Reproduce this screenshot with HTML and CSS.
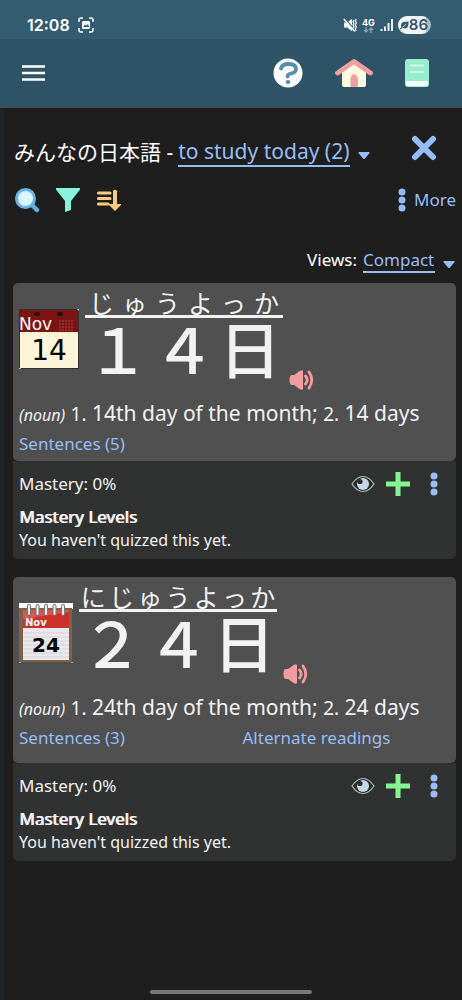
FILE: index.html
```html
<!DOCTYPE html>
<html lang="en">
<head>
<meta charset="utf-8">
<meta name="viewport" content="width=device-width, initial-scale=1">
<title>みんなの日本語</title>
<link rel="stylesheet" href="styles.css">
</head>
<body>
<svg class="defs" aria-hidden="true">
  <symbol id="caret" viewBox="0 0 12 8"><path d="M1 0h10q1 0 .6 1L7 6.500q-1 1-2 0L.4 1Q0 0 1 0z" fill="#98bdf5"/></symbol>
  <symbol id="dots" viewBox="0 0 8 24"><g fill="#98bdf5"><circle cx="4" cy="4" r="3.500"/><circle cx="4" cy="12" r="3.500"/><circle cx="4" cy="20" r="3.500"/></g></symbol>
  <symbol id="speaker" viewBox="0 0 24 20"><path d="M2 5h2.500l6-4.200Q13-.3 13.500 1v18q-.5 1.300-3 .2L4.500 15H2q-2-.5-2-5t2-5z" fill="#f19ca0"/><path d="M16 6q3.500 4 0 8M19.500 2q5.500 8 0 16" fill="none" stroke="#f19ca0" stroke-width="2.800" stroke-linecap="round"/></symbol>
  <symbol id="eye" viewBox="0 0 24 18"><path d="M1 9Q6 1.500 12 1.500T23 9q-5 7.500-11 7.500T1 9z" fill="#272c2d" stroke="#b4bfc4" stroke-width="1.200"/><circle cx="12" cy="9" r="6" fill="#c5d9e4"/><circle cx="9" cy="6.500" r="2.600" fill="#272c2d"/></symbol>
  <symbol id="plus" viewBox="0 0 24 24"><path d="M9.500 0h5v9.500H24v5h-9.500V24h-5v-9.500H0v-5h9.500z" fill="#80f794"/></symbol>
</svg>

<div class="statusbar">
  <span class="clock">12:08</span>
  <svg width="16" height="16" viewBox="0 0 16 16"><path d="M1 5V3q0-2 2-2h2M11 1h2q2 0 2 2v2M15 11v2q0 2-2 2h-2M5 15H3q-2 0-2-2v-2" fill="none" stroke="#fff" stroke-width="1.500"/><rect x="4" y="4" width="8" height="8" rx="1.500" fill="#fff"/><path d="M5 10l2-2.500 1.500 1L10 7l1.200 3z" fill="#335c70"/></svg>
  <div class="signals">
    <svg width="14" height="14" viewBox="0 0 14 14"><path d="M1 4.500h3L9 1v12L4 9.500H1z" fill="#fff"/><path d="M1.500 0l11 13" stroke="#335c70" stroke-width="1.500"/><path d="M.8 1l11 12.500" stroke="#fff" stroke-width="1.400"/><path d="M11 2l-1 1.700 1 1.700-1 1.700 1 1.700-1 1.700M13.300 1l-1 2 1 2-1 2 1 2-1 2 1 2" fill="none" stroke="#fff" stroke-width="1.200"/></svg>
    <span class="network"><span>4G</span>
      <svg width="11" height="6" viewBox="0 0 11 6"><path d="M3 0v5M1 3l2 2 2-2" fill="none" stroke="#92a9b4" stroke-width="1.200"/><path d="M8 6V1M6 3l2-2 2 2" fill="none" stroke="#92a9b4" stroke-width="1.200"/></svg></span>
    <svg width="13" height="14" viewBox="0 0 13 14"><path d="M1.500 11v2M5 8.500V13M8.500 5v8M12 1v12" fill="none" stroke="#fff" stroke-width="1.800"/></svg>
    <span class="battery"><svg width="9" height="10" viewBox="0 0 10 10"><path d="M1.500 8Q0 2.500 4.500 1.800L9.500 1Q10 8 6 8.500 3.500 9 2.500 7.800z" fill="#2f5568"/><path d="M0 9.500l2-1.500" stroke="#2f5568" stroke-width="1.300"/><path d="M3 7.500L7 4" stroke="#e8eff4"/></svg><span>86</span></span>
  </div>
</div>

<header class="appbar">
  <button class="icon" aria-label="Menu"><svg width="23" height="16" viewBox="0 0 23 16"><path d="M0 1.500h23M0 8h23M0 14.500h23" stroke="#fff" stroke-width="2.400"/></svg></button>
  <nav class="shortcuts">
    <button class="icon" aria-label="Help"><svg width="30" height="30" viewBox="0 0 30 30"><circle cx="15" cy="15" r="14.500" fill="#fff"/><path d="M8 10.500q1-4.500 7.500-4.500 7.500 0 7.500 5 0 3.500-5 4.500-3.500.7-3.500 3" fill="none" stroke="#558eac" stroke-width="3.800" stroke-linecap="round"/><ellipse cx="15" cy="24" rx="2.500" ry="2" fill="#558eac"/></svg></button>
    <button class="icon" aria-label="Home"><svg width="38" height="30" viewBox="0 0 38 30"><path d="M7 13L19 5l12 8v14q0 2-2 2H9q-2 0-2-2z" fill="#fdfbe0"/><path d="M2.500 15L19 3.500 35.500 15" fill="none" stroke="#f19e9f" stroke-width="4.800" stroke-linecap="round" stroke-linejoin="round"/><path d="M15.500 29v-8q.5-4 3.500-5 3 1 4 5v8z" fill="#f19e9f"/></svg></button>
    <button class="icon" aria-label="Dictionary"><svg width="24" height="30" viewBox="0 0 24 30"><rect x="0" y="1" width="24" height="28" rx="3" fill="#98edcf"/><path d="M5 7.500h14M5 14h14" stroke="#d9fff2" stroke-width="1.300"/><path d="M1 23h22v3q0 2-3 2H3q-2 0-2-2z" fill="#fff"/></svg></button>
  </nav>
</header>

<main class="page">
  <div class="titlerow">
    <h1 class="title"><span lang="ja">みんなの日本語</span> -</h1>
    <select class="picker" aria-label="Study list"><option>to study today (2)</option></select>
    <svg class="caret" width="12" height="8"><use href="#caret"/></svg>
    <button class="icon close" aria-label="Close"><svg width="26" height="26" viewBox="0 0 26 26"><path d="M4 4l18 18M22 4L4 22" stroke="#98bdf5" stroke-width="6" stroke-linecap="round"/></svg></button>
  </div>

  <div class="toolrow">
    <button class="icon" aria-label="Search"><svg width="26" height="26" viewBox="0 0 26 26"><path d="M18 18l5 5" stroke="#63afe0" stroke-width="4.500" stroke-linecap="round"/><circle cx="11.500" cy="11.500" r="10.500" fill="#63b5ea"/><circle cx="11.500" cy="11.500" r="7.500" fill="#dcf7ff"/></svg></button>
    <button class="icon" aria-label="Filter"><svg width="26" height="26" viewBox="0 0 26 26"><path d="M1 1h24v1.500L16 14v9l-6 2V14L1 2.500z" fill="#87f5dc"/></svg></button>
    <button class="icon" aria-label="Sort"><svg width="26" height="26" viewBox="0 0 26 26"><path d="M2.500 6H14M2.500 11.500H14M2.500 17H12" stroke="#f8cd78" stroke-width="3.200" stroke-linecap="round"/><path d="M17 4q2-2.500 4 0v13h4q.5 1-1 2l-5 5-5-5q-1.500-1-1-2h4z" fill="#f8cd78"/></svg></button>
    <button class="more"><svg width="8" height="24"><use href="#dots"/></svg>More</button>
  </div>

  <div class="viewrow">
    <label for="view">Views:</label>
    <select id="view" class="picker small"><option>Compact</option></select>
    <svg class="caret" width="12" height="8"><use href="#caret"/></svg>
  </div>

  <article class="entry">
    <section class="word">
      <div class="headline">
        <svg class="calendar" width="60" height="60" viewBox="0 0 60 60"><rect x=".5" y=".5" width="59" height="59" fill="#fcf5d8" stroke="#353030"/><path d="M0 59v1h2M58 0h2v2" stroke="#fff" fill="none"/><path d="M1 1h58v22H1z" fill="#7c1414"/><ellipse cx="18" cy="5" rx="3" ry="2" fill="#201010"/><ellipse cx="41" cy="5" rx="3" ry="2" fill="#201010"/><path d="M40 12h15M40 15h15M40 18h15M40 21h15" stroke="#9e4b4b" stroke-dasharray="2 1"/><text x="0" y="21" class="cal-month">Nov</text><text x="30" y="51" class="cal-day" text-anchor="middle">14</text></svg>
        <div class="reading" lang="ja">
          <div class="kana"><span>じ</span><span>ゅ</span><span>う</span><span>よ</span><span>っ</span><span>か</span></div>
          <div class="kanji"><span>１</span><span>４</span><span>日</span></div>
        </div>
        <button class="icon listen" aria-label="Listen"><svg width="25" height="20"><use href="#speaker"/></svg></button>
      </div>
      <p class="meaning"><i>(noun)</i> <span class="num">1.</span> 14th day of the month; <span class="num">2.</span> 14 days</p>
      <div class="links"><a href="#">Sentences (5)</a></div>
    </section>
    <section class="mastery">
      <div class="masteryrow">
        <span>Mastery: 0%</span>
        <div class="actions">
          <button class="icon" aria-label="Known"><svg width="24" height="18"><use href="#eye"/></svg></button>
          <button class="icon" aria-label="Add"><svg width="24" height="24"><use href="#plus"/></svg></button>
          <button class="icon" aria-label="Options"><svg width="8" height="24"><use href="#dots"/></svg></button>
        </div>
      </div>
      <h2 class="levels">Mastery Levels</h2>
      <p class="note">You haven't quizzed this yet.</p>
    </section>
  </article>

  <article class="entry">
    <section class="word roomy">
      <div class="headline">
        <svg class="calendar" width="54" height="60" viewBox="0 0 54 60"><path d="M0 0h54v6H0z" fill="#fff"/><path d="M0 5h53v54H0z" fill="#7d6247"/><path d="M4 7h46v50H4z" fill="#e9e9ed"/><path d="M4 30h46M4 34h46M4 38h46M4 42h46M4 46h46M4 50h46M4 54h46" stroke="#d3d3d9"/><path d="M4 7h46v18H4z" fill="#cd302b"/><path d="M4 7h46v2L4 16z" fill="#dc544d"/><g stroke="#777" stroke-width="4" stroke-linecap="round"><path d="M10 3v8M18.500 3v8M27 3v8M35.500 3v8M44 3v8"/></g><g stroke="#eee" stroke-width="2" stroke-linecap="round"><path d="M10 3v8M18.500 3v8M27 3v8M35.500 3v8M44 3v8"/></g><path d="M0 60h2M52 60h2" stroke="#fff"/><text x="6" y="23" class="pad-month">Nov</text><text x="27" y="49" class="pad-day" text-anchor="middle">24</text></svg>
        <div class="reading" lang="ja">
          <div class="kana"><span>に</span><span>じ</span><span>ゅ</span><span>う</span><span>よ</span><span>っ</span><span>か</span></div>
          <div class="kanji"><span>２</span><span>４</span><span>日</span></div>
        </div>
        <button class="icon listen" aria-label="Listen"><svg width="25" height="20"><use href="#speaker"/></svg></button>
      </div>
      <p class="meaning"><i>(noun)</i> <span class="num">1.</span> 24th day of the month; <span class="num">2.</span> 24 days</p>
      <div class="links"><a href="#">Sentences (3)</a><a href="#">Alternate readings</a></div>
    </section>
    <section class="mastery">
      <div class="masteryrow">
        <span>Mastery: 0%</span>
        <div class="actions">
          <button class="icon" aria-label="Known"><svg width="24" height="18"><use href="#eye"/></svg></button>
          <button class="icon" aria-label="Add"><svg width="24" height="24"><use href="#plus"/></svg></button>
          <button class="icon" aria-label="Options"><svg width="8" height="24"><use href="#dots"/></svg></button>
        </div>
      </div>
      <h2 class="levels">Mastery Levels</h2>
      <p class="note">You haven't quizzed this yet.</p>
    </section>
  </article>

  <div class="homebar"></div>
</main>
</body>
</html>
```
FILE: styles.css
```css
* { box-sizing: border-box; }
body {
  margin: 0;
  min-height: 100vh;
  display: flex;
  flex-direction: column;
  background: #1e1e1e;
  color: #f2f2f2;
  font: 17px/24px "Noto Sans", "Noto Sans CJK JP", sans-serif;
}
h1, h2, p { margin: 0; font-weight: 400; }
svg { display: block; flex: none; }
.defs { position: absolute; width: 0; height: 0; }
button, select {
  appearance: none;
  border: 0;
  border-radius: 0;
  padding: 0;
  background: none;
  color: #98bdf5;
  font: inherit;
}
.icon { display: block; flex: none; }

.statusbar {
  display: flex;
  align-items: center;
  gap: 8px;
  height: 39px;
  padding: 11px 31px 0 27px;
  background: #335c70;
  color: #fff;
}
.clock { font: 600 16px/20px Inter, sans-serif; }
.signals { display: flex; align-items: center; gap: 5px; margin-left: auto; }
.network { display: flex; flex-direction: column; align-items: center; font: 700 9px/9px Inter, sans-serif; }
.battery {
  display: flex;
  align-items: center;
  height: 18px;
  padding: 0 3px 0 2px;
  border-radius: 9px;
  background: linear-gradient(90deg, #f0f5f8 86%, #a7bac4 86%);
  color: #2f5568;
  font: 600 15px/18px Inter, sans-serif;
}

.appbar {
  display: flex;
  align-items: center;
  justify-content: space-between;
  height: 69px;
  padding: 0 33px 0 22px;
  border-bottom: 1px solid #444c50;
  background: #2f5366;
}
.shortcuts { display: flex; gap: 32px; }

.page {
  flex: 1;
  display: flex;
  flex-direction: column;
  padding: 26px 6px 6px 9px;
  border-left: 4px solid #1d2527;
}
.titlerow { display: flex; align-items: center; height: 36px; padding-left: 1px; }
.title { margin-right: 5px; font-size: 21px; line-height: 28px; color: #fff; }
.picker { border-bottom: 2px solid #98bdf5; font-size: 21px; line-height: 26px; height: 30px; }
.picker.small { font-size: 17px; line-height: 22px; height: 24px; }
.caret { margin-left: 8px; margin-top: 8px; }
.close { margin: 0 19px 8px auto; }

.toolrow { display: flex; align-items: center; gap: 15px; height: 26px; margin-top: 17px; padding-left: 1px; }
.more { display: flex; align-items: center; gap: 8px; margin-left: auto; }

.viewrow { display: flex; align-items: center; justify-content: flex-end; height: 28px; margin-top: 34px; }
.viewrow label { margin: 0 6px 2px 0; color: #fff; }
.viewrow .caret { margin-right: 1px; }

.entry { margin-top: 18px; }
.viewrow + .entry { margin-top: 8px; }
.word { padding: 0 6px 5px; border-radius: 5px; background: #505050; }
.word.roomy { padding-bottom: 13px; }
.headline { display: flex; align-items: flex-start; height: 116px; }
.calendar { margin: 26px 6px 0 0; }
.reading { width: 198px; padding-top: 5px; }
.kana {
  display: flex;
  justify-content: space-around;
  height: 30px;
  border-bottom: 3px solid #f2f2f2;
  font: 25px/28px "Noto Sans CJK JP", sans-serif;
}
.kanji {
  display: flex;
  justify-content: space-around;
  font: 500 62px/58px "Noto Sans CJK JP", sans-serif;
}
.listen { margin: 87px 0 0 6px; }
.meaning { font-size: 21px; line-height: 28px; }
.meaning i { font-size: 16px; }
.num { font-size: 19px; }
.links { display: grid; grid-template-columns: 1fr 1fr; column-gap: 16px; margin-top: 3px; }
.links a { color: #98bdf5; text-decoration: none; }

.mastery { padding: 7px 6px 8px; border-radius: 0 0 5px 5px; background: #303231; }
.masteryrow { display: flex; align-items: center; justify-content: space-between; height: 32px; }
.actions { display: flex; align-items: center; gap: 11px; padding-right: 12px; }
.actions .icon:last-child { margin-left: 9px; }
.levels { font-size: 17px; line-height: 24px; text-shadow: 1px 0 #f2f2f2; margin-top: 5px; }
.note { font-size: 16px; line-height: 22px; }

.homebar { align-self: center; width: 162px; height: 4px; margin: auto 7px 0 0; border-radius: 2px; background: #777; }

.cal-month { font: 17px "DejaVu Sans", sans-serif; fill: #fff; }
.cal-day { font: 28px "DejaVu Sans", sans-serif; fill: #000; }
.pad-month { font: 700 10px "DejaVu Sans", sans-serif; fill: #fff; }
.pad-day { font: 700 20px "DejaVu Sans", sans-serif; fill: #000; }
```
